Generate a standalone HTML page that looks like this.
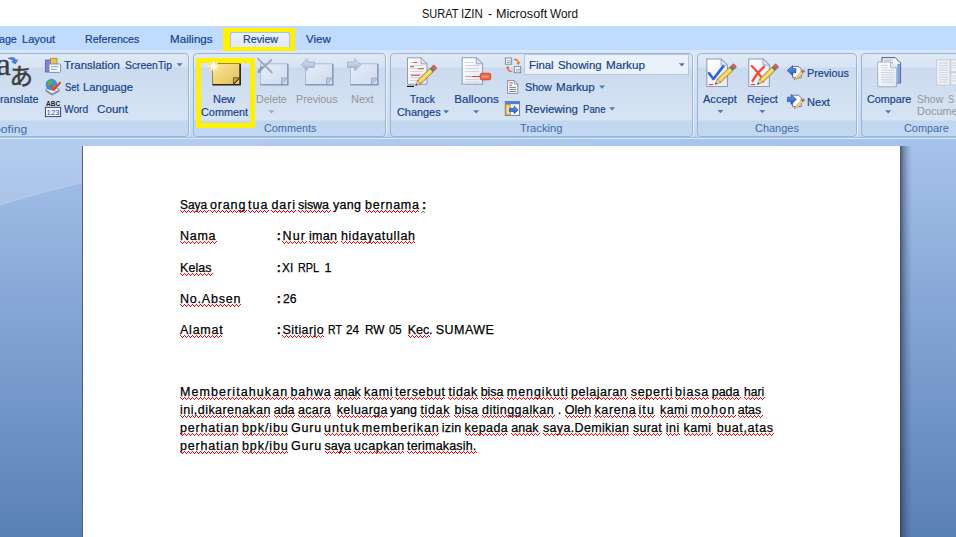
<!DOCTYPE html>
<html lang="id">
<head>
<meta charset="utf-8">
<title>SURAT IZIN - Microsoft Word</title>
<style>
*{box-sizing:border-box;margin:0;padding:0}
html,body{width:956px;height:537px;overflow:hidden;background:#fff}
body{position:relative;font-family:"Liberation Sans",sans-serif;font-size:11px;color:#15428b}
.abs{position:absolute}
#title{left:0;top:0;width:956px;height:26px;background:#fff}
#tabs{left:0;top:26px;width:956px;height:24px;background:#bfdbff}
.tab{position:absolute;top:7px;font-size:11.5px;color:#15428b;white-space:nowrap}
#ribbon{left:0;top:50px;width:956px;height:89px;background:linear-gradient(#dbe7f7 0,#c6daf2 80px,#bdd3ef 87px,#a3bfe6 87px,#a3bfe6 88px,#d2eefb 88px,#d2eefb 89px)}
.grp{position:absolute;top:2.5px;height:84px;border:1px solid #9ab5da;border-radius:4px;overflow:hidden;box-shadow:1px 0 0 rgba(255,255,255,.6);
 background:linear-gradient(#dfe9f6 0,#d8e4f3 13px,#cbdaee 14px,#d6e4f4 66px,#c1d7f0 67px,#c3d9f1 100%)}
.grp .lbl{position:absolute;left:0;right:0;top:70px;text-align:center;font-size:11px;color:#3e6aaa}
.t{position:absolute;white-space:nowrap;font-size:11px;color:#15428b}
.u{position:absolute;white-space:nowrap;font-size:11.6px;line-height:14px;transform-origin:0 50%}
.u.k{font-size:13.4px;line-height:16px;color:#111}
.u.b{color:#15428b;-webkit-text-stroke:.2px #15428b}
.u.g{color:#969696}
.u.l{color:#3e6aaa}
.ar{position:absolute;width:0;height:0;border-left:2.8px solid transparent;border-right:2.8px solid transparent;border-top:3px solid #4a6fa8}
#work{left:0;top:139px;width:956px;height:398px;background:linear-gradient(#a6c3ec 0,#5980b6 100%)}
#page{left:83px;top:146px;width:817px;height:391px;background:#fff}
#shadow{left:900px;top:146px;width:12px;height:391px;background:linear-gradient(90deg,rgba(45,55,80,.8) 0,rgba(45,55,80,.45) 3px,rgba(45,55,80,.15) 8px,rgba(45,55,80,0) 12px)}
#pl{left:82px;top:146px;width:1px;height:391px;background:#55606e}
.dl{position:absolute;white-space:nowrap;font-size:12.5px;color:#000;line-height:16px;transform-origin:0 50%;-webkit-text-stroke:.25px #000}
</style>
</head>
<body>
<div id="title" class="abs"></div>
<div id="tabs" class="abs">
</div>
<div id="ribbon" class="abs">
  <div class="grp" style="left:-10px;width:199px"></div>
  <div class="grp" style="left:193px;width:193px"></div>
  <div class="grp" style="left:390px;width:303px"></div>
  <div class="grp" style="left:697px;width:160px"></div>
  <div class="grp" style="left:861px;width:120px"></div>
</div>
<div id="work" class="abs"></div>
<svg class="abs" style="left:0;top:139px" width="84" height="80" viewBox="0 0 84 80"><path d="M0 0 H84 V43 C55 50 25 58 0 66 Z" fill="#fff" fill-opacity=".16"/><path d="M84 43 C55 50 25 58 0 66" fill="none" stroke="#fff" stroke-opacity=".22" stroke-width="1.2"/></svg>
<div class="abs" style="left:84px;top:139px;width:816px;height:7px;background:linear-gradient(90deg,rgba(255,255,255,.16),rgba(255,255,255,.02))"></div>
<div id="pl" class="abs"></div>
<div id="page" class="abs"></div>
<div id="shadow" class="abs"></div>
<div id="doc">
<span class="dl" style="left:180.0px;top:197.0px;transform:scaleX(0.954)">Saya</span>
<span class="dl" style="left:210.0px;top:197.0px;letter-spacing:0.85px">orang</span>
<span class="dl" style="left:248.0px;top:197.0px;letter-spacing:1.05px">tua</span>
<span class="dl" style="left:271.4px;top:197.0px;letter-spacing:0.92px">dari</span>
<span class="dl" style="left:298.0px;top:197.0px;letter-spacing:-0.07px">siswa</span>
<span class="dl" style="left:333.0px;top:197.0px;letter-spacing:0.30px">yang</span>
<span class="dl" style="left:365.0px;top:197.0px;letter-spacing:0.78px">bernama</span>
<span class="dl" style="left:422.0px;top:197.0px;letter-spacing:0.00px;font-weight:bold">:</span>
<span class="dl" style="left:180.0px;top:228.0px;letter-spacing:0.72px">Nama</span>
<span class="dl" style="left:276.8px;top:228.0px;letter-spacing:0.00px;font-weight:bold">:</span>
<span class="dl" style="left:282.5px;top:228.0px;letter-spacing:1.17px">Nur</span>
<span class="dl" style="left:309.0px;top:228.0px;letter-spacing:0.30px">iman</span>
<span class="dl" style="left:341.0px;top:228.0px;letter-spacing:0.66px">hidayatullah</span>
<span class="dl" style="left:180.0px;top:260.0px;letter-spacing:0.08px">Kelas</span>
<span class="dl" style="left:276.8px;top:260.0px;letter-spacing:0.00px;font-weight:bold">:</span>
<span class="dl" style="left:282.4px;top:260.0px;transform:scaleX(0.948)">XI</span>
<span class="dl" style="left:298.3px;top:260.0px;transform:scaleX(0.867)">RPL</span>
<span class="dl" style="left:324.4px;top:260.0px;letter-spacing:0.00px">1</span>
<span class="dl" style="left:180.0px;top:291.0px;letter-spacing:0.80px">No.Absen</span>
<span class="dl" style="left:276.8px;top:291.0px;letter-spacing:0.00px;font-weight:bold">:</span>
<span class="dl" style="left:282.5px;top:291.0px;transform:scaleX(0.971)">26</span>
<span class="dl" style="left:180.0px;top:322.0px;letter-spacing:0.76px">Alamat</span>
<span class="dl" style="left:276.8px;top:322.0px;letter-spacing:0.00px;font-weight:bold">:</span>
<span class="dl" style="left:282.5px;top:322.0px;letter-spacing:0.43px">Sitiarjo</span>
<span class="dl" style="left:328.2px;top:322.0px;transform:scaleX(0.840)">RT</span>
<span class="dl" style="left:346.0px;top:322.0px;transform:scaleX(0.949)">24</span>
<span class="dl" style="left:365.0px;top:322.0px;transform:scaleX(0.951)">RW</span>
<span class="dl" style="left:389.0px;top:322.0px;transform:scaleX(0.906)">05</span>
<span class="dl" style="left:407.7px;top:322.0px;letter-spacing:-0.04px">Kec.</span>
<span class="dl" style="left:435.8px;top:322.0px;letter-spacing:0.44px">SUMAWE</span>
<span class="dl" style="left:180.0px;top:384.0px;letter-spacing:1.08px">Memberitahukan</span>
<span class="dl" style="left:290.5px;top:384.0px;letter-spacing:0.84px">bahwa</span>
<span class="dl" style="left:334.0px;top:384.0px;letter-spacing:-0.10px">anak</span>
<span class="dl" style="left:364.0px;top:384.0px;letter-spacing:0.73px">kami</span>
<span class="dl" style="left:395.0px;top:384.0px;letter-spacing:0.69px">tersebut</span>
<span class="dl" style="left:448.5px;top:384.0px;letter-spacing:0.60px">tidak</span>
<span class="dl" style="left:480.7px;top:384.0px;letter-spacing:-0.05px">bisa</span>
<span class="dl" style="left:506.8px;top:384.0px;letter-spacing:0.93px">mengikuti</span>
<span class="dl" style="left:571.0px;top:384.0px;letter-spacing:0.53px">pelajaran</span>
<span class="dl" style="left:630.7px;top:384.0px;letter-spacing:0.71px">seperti</span>
<span class="dl" style="left:674.9px;top:384.0px;letter-spacing:0.88px">biasa</span>
<span class="dl" style="left:711.7px;top:384.0px;letter-spacing:-0.00px">pada</span>
<span class="dl" style="left:743.8px;top:384.0px;transform:scaleX(0.964)">hari</span>
<span class="dl" style="left:180.0px;top:402.0px;letter-spacing:0.45px">ini,dikarenakan</span>
<span class="dl" style="left:273.8px;top:402.0px;letter-spacing:-0.08px">ada</span>
<span class="dl" style="left:297.9px;top:402.0px;letter-spacing:0.38px">acara</span>
<span class="dl" style="left:336.7px;top:402.0px;letter-spacing:0.42px">keluarga</span>
<span class="dl" style="left:390.0px;top:402.0px;letter-spacing:-0.04px">yang</span>
<span class="dl" style="left:420.4px;top:402.0px;letter-spacing:0.67px">tidak</span>
<span class="dl" style="left:454.5px;top:402.0px;letter-spacing:0.19px">bisa</span>
<span class="dl" style="left:482.0px;top:402.0px;letter-spacing:0.45px">ditinggalkan</span>
<span class="dl" style="left:557.7px;top:402.0px;letter-spacing:0.00px">.</span>
<span class="dl" style="left:564.7px;top:402.0px;letter-spacing:0.03px">Oleh</span>
<span class="dl" style="left:594.5px;top:402.0px;letter-spacing:0.59px">karena</span>
<span class="dl" style="left:638.4px;top:402.0px;letter-spacing:1.20px">itu</span>
<span class="dl" style="left:660.0px;top:402.0px;letter-spacing:0.40px">kami</span>
<span class="dl" style="left:691.0px;top:402.0px;letter-spacing:1.29px">mohon</span>
<span class="dl" style="left:737.8px;top:402.0px;letter-spacing:-0.08px">atas</span>
<span class="dl" style="left:180.0px;top:420.0px;letter-spacing:0.81px">perhatian</span>
<span class="dl" style="left:242.0px;top:420.0px;letter-spacing:0.91px">bpk/ibu</span>
<span class="dl" style="left:291.0px;top:420.0px;letter-spacing:0.83px">Guru</span>
<span class="dl" style="left:324.0px;top:420.0px;letter-spacing:1.10px">untuk</span>
<span class="dl" style="left:361.8px;top:420.0px;letter-spacing:0.91px">memberikan</span>
<span class="dl" style="left:441.8px;top:420.0px;letter-spacing:0.21px">izin</span>
<span class="dl" style="left:464.6px;top:420.0px;letter-spacing:0.44px">kepada</span>
<span class="dl" style="left:511.2px;top:420.0px;letter-spacing:0.10px">anak</span>
<span class="dl" style="left:543.0px;top:420.0px;letter-spacing:0.33px">saya.Demikian</span>
<span class="dl" style="left:633.0px;top:420.0px;letter-spacing:0.25px">surat</span>
<span class="dl" style="left:665.8px;top:420.0px;letter-spacing:0.44px">ini</span>
<span class="dl" style="left:683.6px;top:420.0px;letter-spacing:0.33px">kami</span>
<span class="dl" style="left:716.7px;top:420.0px;letter-spacing:0.61px">buat,atas</span>
<span class="dl" style="left:180.0px;top:438.0px;letter-spacing:0.81px">perhatian</span>
<span class="dl" style="left:242.0px;top:438.0px;letter-spacing:0.91px">bpk/ibu</span>
<span class="dl" style="left:291.0px;top:438.0px;letter-spacing:0.83px">Guru</span>
<span class="dl" style="left:324.6px;top:438.0px;letter-spacing:-0.07px">saya</span>
<span class="dl" style="left:354.0px;top:438.0px;letter-spacing:0.51px">ucapkan</span>
<span class="dl" style="left:407.0px;top:438.0px;letter-spacing:0.17px">terimakasih.</span>
</div>
<svg id="sq" class="abs" style="left:0;top:0" width="956" height="537" viewBox="0 0 956 537" fill="none" stroke="#ff0000" stroke-width="1" stroke-linejoin="miter" shape-rendering="crispEdges">
<polyline points="180.5,210.5 182.5,212.5 184.5,210.5 186.5,212.5 188.5,210.5 190.5,212.5 192.5,210.5 194.5,212.5 196.5,210.5 198.5,212.5 200.5,210.5 202.5,212.5 204.5,210.5 206.5,212.5 208.5,210.5"/>
<polyline points="210.5,210.5 212.5,212.5 214.5,210.5 216.5,212.5 218.5,210.5 220.5,212.5 222.5,210.5 224.5,212.5 226.5,210.5 228.5,212.5 230.5,210.5 232.5,212.5 234.5,210.5 236.5,212.5 238.5,210.5 240.5,212.5 242.5,210.5 244.5,212.5 246.5,210.5"/>
<polyline points="248.5,210.5 250.5,212.5 252.5,210.5 254.5,212.5 256.5,210.5 258.5,212.5 260.5,210.5 262.5,212.5 264.5,210.5 266.5,212.5 268.5,210.5"/>
<polyline points="271.5,210.5 273.5,212.5 275.5,210.5 277.5,212.5 279.5,210.5 281.5,212.5 283.5,210.5 285.5,212.5 287.5,210.5 289.5,212.5 291.5,210.5 293.5,212.5 295.5,210.5"/>
<polyline points="298.5,210.5 300.5,212.5 302.5,210.5 304.5,212.5 306.5,210.5 308.5,212.5 310.5,210.5 312.5,212.5 314.5,210.5 316.5,212.5 318.5,210.5 320.5,212.5 322.5,210.5 324.5,212.5 326.5,210.5 328.5,212.5 330.5,210.5"/>
<polyline points="365.5,210.5 367.5,212.5 369.5,210.5 371.5,212.5 373.5,210.5 375.5,212.5 377.5,210.5 379.5,212.5 381.5,210.5 383.5,212.5 385.5,210.5 387.5,212.5 389.5,210.5 391.5,212.5 393.5,210.5 395.5,212.5 397.5,210.5 399.5,212.5 401.5,210.5 403.5,212.5 405.5,210.5 407.5,212.5 409.5,210.5 411.5,212.5 413.5,210.5 415.5,212.5 417.5,210.5 419.5,212.5"/>
<polyline stroke="#3a9a3a" points="421.0,213.0 423.0,211.0 425.0,213.0"/>
<polyline points="180.5,241.5 182.5,243.5 184.5,241.5 186.5,243.5 188.5,241.5 190.5,243.5 192.5,241.5 194.5,243.5 196.5,241.5 198.5,243.5 200.5,241.5 202.5,243.5 204.5,241.5 206.5,243.5 208.5,241.5 210.5,243.5 212.5,241.5 214.5,243.5 216.5,241.5"/>
<polyline points="282.5,241.5 284.5,243.5 286.5,241.5 288.5,243.5 290.5,241.5 292.5,243.5 294.5,241.5 296.5,243.5 298.5,241.5 300.5,243.5 302.5,241.5 304.5,243.5 306.5,241.5"/>
<polyline points="309.5,241.5 311.5,243.5 313.5,241.5 315.5,243.5 317.5,241.5 319.5,243.5 321.5,241.5 323.5,243.5 325.5,241.5 327.5,243.5 329.5,241.5 331.5,243.5 333.5,241.5 335.5,243.5 337.5,241.5"/>
<polyline points="341.5,241.5 343.5,243.5 345.5,241.5 347.5,243.5 349.5,241.5 351.5,243.5 353.5,241.5 355.5,243.5 357.5,241.5 359.5,243.5 361.5,241.5 363.5,243.5 365.5,241.5 367.5,243.5 369.5,241.5 371.5,243.5 373.5,241.5 375.5,243.5 377.5,241.5 379.5,243.5 381.5,241.5 383.5,243.5 385.5,241.5 387.5,243.5 389.5,241.5 391.5,243.5 393.5,241.5 395.5,243.5 397.5,241.5 399.5,243.5 401.5,241.5 403.5,243.5 405.5,241.5 407.5,243.5 409.5,241.5 411.5,243.5 413.5,241.5 415.5,243.5"/>
<polyline points="180.5,273.5 182.5,275.5 184.5,273.5 186.5,275.5 188.5,273.5 190.5,275.5 192.5,273.5 194.5,275.5 196.5,273.5 198.5,275.5 200.5,273.5 202.5,275.5 204.5,273.5 206.5,275.5 208.5,273.5 210.5,275.5 212.5,273.5"/>
<polyline points="180.5,304.5 182.5,306.5 184.5,304.5 186.5,306.5 188.5,304.5 190.5,306.5 192.5,304.5 194.5,306.5 196.5,304.5 198.5,306.5 200.5,304.5 202.5,306.5 204.5,304.5 206.5,306.5 208.5,304.5 210.5,306.5 212.5,304.5 214.5,306.5 216.5,304.5 218.5,306.5 220.5,304.5 222.5,306.5 224.5,304.5 226.5,306.5 228.5,304.5 230.5,306.5 232.5,304.5 234.5,306.5 236.5,304.5 238.5,306.5 240.5,304.5"/>
<polyline points="180.5,335.5 182.5,337.5 184.5,335.5 186.5,337.5 188.5,335.5 190.5,337.5 192.5,335.5 194.5,337.5 196.5,335.5 198.5,337.5 200.5,335.5 202.5,337.5 204.5,335.5 206.5,337.5 208.5,335.5 210.5,337.5 212.5,335.5 214.5,337.5 216.5,335.5 218.5,337.5 220.5,335.5 222.5,337.5"/>
<polyline points="282.5,335.5 284.5,337.5 286.5,335.5 288.5,337.5 290.5,335.5 292.5,337.5 294.5,335.5 296.5,337.5 298.5,335.5 300.5,337.5 302.5,335.5 304.5,337.5 306.5,335.5 308.5,337.5 310.5,335.5 312.5,337.5 314.5,335.5 316.5,337.5 318.5,335.5 320.5,337.5 322.5,335.5 324.5,337.5"/>
<polyline points="408.5,335.5 410.5,337.5 412.5,335.5 414.5,337.5 416.5,335.5 418.5,337.5 420.5,335.5 422.5,337.5 424.5,335.5 426.5,337.5 428.5,335.5 430.5,337.5"/>
<polyline points="180.5,397.5 182.5,399.5 184.5,397.5 186.5,399.5 188.5,397.5 190.5,399.5 192.5,397.5 194.5,399.5 196.5,397.5 198.5,399.5 200.5,397.5 202.5,399.5 204.5,397.5 206.5,399.5 208.5,397.5 210.5,399.5 212.5,397.5 214.5,399.5 216.5,397.5 218.5,399.5 220.5,397.5 222.5,399.5 224.5,397.5 226.5,399.5 228.5,397.5 230.5,399.5 232.5,397.5 234.5,399.5 236.5,397.5 238.5,399.5 240.5,397.5 242.5,399.5 244.5,397.5 246.5,399.5 248.5,397.5 250.5,399.5 252.5,397.5 254.5,399.5 256.5,397.5 258.5,399.5 260.5,397.5 262.5,399.5 264.5,397.5 266.5,399.5 268.5,397.5 270.5,399.5 272.5,397.5 274.5,399.5 276.5,397.5 278.5,399.5 280.5,397.5 282.5,399.5 284.5,397.5 286.5,399.5 288.5,397.5"/>
<polyline points="290.5,397.5 292.5,399.5 294.5,397.5 296.5,399.5 298.5,397.5 300.5,399.5 302.5,397.5 304.5,399.5 306.5,397.5 308.5,399.5 310.5,397.5 312.5,399.5 314.5,397.5 316.5,399.5 318.5,397.5 320.5,399.5 322.5,397.5 324.5,399.5 326.5,397.5 328.5,399.5 330.5,397.5"/>
<polyline points="334.5,397.5 336.5,399.5 338.5,397.5 340.5,399.5 342.5,397.5 344.5,399.5 346.5,397.5 348.5,399.5 350.5,397.5 352.5,399.5 354.5,397.5 356.5,399.5 358.5,397.5 360.5,399.5"/>
<polyline points="364.5,397.5 366.5,399.5 368.5,397.5 370.5,399.5 372.5,397.5 374.5,399.5 376.5,397.5 378.5,399.5 380.5,397.5 382.5,399.5 384.5,397.5 386.5,399.5 388.5,397.5 390.5,399.5 392.5,397.5"/>
<polyline points="395.5,397.5 397.5,399.5 399.5,397.5 401.5,399.5 403.5,397.5 405.5,399.5 407.5,397.5 409.5,399.5 411.5,397.5 413.5,399.5 415.5,397.5 417.5,399.5 419.5,397.5 421.5,399.5 423.5,397.5 425.5,399.5 427.5,397.5 429.5,399.5 431.5,397.5 433.5,399.5 435.5,397.5 437.5,399.5 439.5,397.5 441.5,399.5 443.5,397.5 445.5,399.5"/>
<polyline points="448.5,397.5 450.5,399.5 452.5,397.5 454.5,399.5 456.5,397.5 458.5,399.5 460.5,397.5 462.5,399.5 464.5,397.5 466.5,399.5 468.5,397.5 470.5,399.5 472.5,397.5 474.5,399.5 476.5,397.5 478.5,399.5"/>
<polyline points="481.5,397.5 483.5,399.5 485.5,397.5 487.5,399.5 489.5,397.5 491.5,399.5 493.5,397.5 495.5,399.5 497.5,397.5 499.5,399.5 501.5,397.5 503.5,399.5"/>
<polyline points="507.5,397.5 509.5,399.5 511.5,397.5 513.5,399.5 515.5,397.5 517.5,399.5 519.5,397.5 521.5,399.5 523.5,397.5 525.5,399.5 527.5,397.5 529.5,399.5 531.5,397.5 533.5,399.5 535.5,397.5 537.5,399.5 539.5,397.5 541.5,399.5 543.5,397.5 545.5,399.5 547.5,397.5 549.5,399.5 551.5,397.5 553.5,399.5 555.5,397.5 557.5,399.5 559.5,397.5 561.5,399.5 563.5,397.5 565.5,399.5 567.5,397.5"/>
<polyline points="571.5,397.5 573.5,399.5 575.5,397.5 577.5,399.5 579.5,397.5 581.5,399.5 583.5,397.5 585.5,399.5 587.5,397.5 589.5,399.5 591.5,397.5 593.5,399.5 595.5,397.5 597.5,399.5 599.5,397.5 601.5,399.5 603.5,397.5 605.5,399.5 607.5,397.5 609.5,399.5 611.5,397.5 613.5,399.5 615.5,397.5 617.5,399.5 619.5,397.5 621.5,399.5 623.5,397.5 625.5,399.5 627.5,397.5"/>
<polyline points="631.5,397.5 633.5,399.5 635.5,397.5 637.5,399.5 639.5,397.5 641.5,399.5 643.5,397.5 645.5,399.5 647.5,397.5 649.5,399.5 651.5,397.5 653.5,399.5 655.5,397.5 657.5,399.5 659.5,397.5 661.5,399.5 663.5,397.5 665.5,399.5 667.5,397.5 669.5,399.5 671.5,397.5 673.5,399.5"/>
<polyline points="675.5,397.5 677.5,399.5 679.5,397.5 681.5,399.5 683.5,397.5 685.5,399.5 687.5,397.5 689.5,399.5 691.5,397.5 693.5,399.5 695.5,397.5 697.5,399.5 699.5,397.5 701.5,399.5 703.5,397.5 705.5,399.5 707.5,397.5 709.5,399.5"/>
<polyline points="712.5,397.5 714.5,399.5 716.5,397.5 718.5,399.5 720.5,397.5 722.5,399.5 724.5,397.5 726.5,399.5 728.5,397.5 730.5,399.5 732.5,397.5 734.5,399.5 736.5,397.5 738.5,399.5 740.5,397.5"/>
<polyline points="744.5,397.5 746.5,399.5 748.5,397.5 750.5,399.5 752.5,397.5 754.5,399.5 756.5,397.5 758.5,399.5 760.5,397.5 762.5,399.5 764.5,397.5"/>
<polyline points="180.5,415.5 182.5,417.5 184.5,415.5 186.5,417.5 188.5,415.5 190.5,417.5 192.5,415.5 194.5,417.5 196.5,415.5 198.5,417.5 200.5,415.5 202.5,417.5 204.5,415.5 206.5,417.5 208.5,415.5 210.5,417.5 212.5,415.5 214.5,417.5 216.5,415.5 218.5,417.5 220.5,415.5 222.5,417.5 224.5,415.5 226.5,417.5 228.5,415.5 230.5,417.5 232.5,415.5 234.5,417.5 236.5,415.5 238.5,417.5 240.5,415.5 242.5,417.5 244.5,415.5 246.5,417.5 248.5,415.5 250.5,417.5 252.5,415.5 254.5,417.5 256.5,415.5 258.5,417.5 260.5,415.5 262.5,417.5 264.5,415.5 266.5,417.5 268.5,415.5 270.5,417.5"/>
<polyline points="274.5,415.5 276.5,417.5 278.5,415.5 280.5,417.5 282.5,415.5 284.5,417.5 286.5,415.5 288.5,417.5 290.5,415.5 292.5,417.5 294.5,415.5"/>
<polyline points="298.5,415.5 300.5,417.5 302.5,415.5 304.5,417.5 306.5,415.5 308.5,417.5 310.5,415.5 312.5,417.5 314.5,415.5 316.5,417.5 318.5,415.5 320.5,417.5 322.5,415.5 324.5,417.5 326.5,415.5 328.5,417.5 330.5,415.5"/>
<polyline points="337.5,415.5 339.5,417.5 341.5,415.5 343.5,417.5 345.5,415.5 347.5,417.5 349.5,415.5 351.5,417.5 353.5,415.5 355.5,417.5 357.5,415.5 359.5,417.5 361.5,415.5 363.5,417.5 365.5,415.5 367.5,417.5 369.5,415.5 371.5,417.5 373.5,415.5 375.5,417.5 377.5,415.5 379.5,417.5 381.5,415.5 383.5,417.5 385.5,415.5 387.5,417.5"/>
<polyline points="420.5,415.5 422.5,417.5 424.5,415.5 426.5,417.5 428.5,415.5 430.5,417.5 432.5,415.5 434.5,417.5 436.5,415.5 438.5,417.5 440.5,415.5 442.5,417.5 444.5,415.5 446.5,417.5 448.5,415.5 450.5,417.5"/>
<polyline points="454.5,415.5 456.5,417.5 458.5,415.5 460.5,417.5 462.5,415.5 464.5,417.5 466.5,415.5 468.5,417.5 470.5,415.5 472.5,417.5 474.5,415.5 476.5,417.5 478.5,415.5"/>
<polyline points="482.5,415.5 484.5,417.5 486.5,415.5 488.5,417.5 490.5,415.5 492.5,417.5 494.5,415.5 496.5,417.5 498.5,415.5 500.5,417.5 502.5,415.5 504.5,417.5 506.5,415.5 508.5,417.5 510.5,415.5 512.5,417.5 514.5,415.5 516.5,417.5 518.5,415.5 520.5,417.5 522.5,415.5 524.5,417.5 526.5,415.5 528.5,417.5 530.5,415.5 532.5,417.5 534.5,415.5 536.5,417.5 538.5,415.5 540.5,417.5 542.5,415.5 544.5,417.5 546.5,415.5 548.5,417.5 550.5,415.5 552.5,417.5 554.5,415.5"/>
<polyline points="565.5,415.5 567.5,417.5 569.5,415.5 571.5,417.5 573.5,415.5 575.5,417.5 577.5,415.5 579.5,417.5 581.5,415.5 583.5,417.5 585.5,415.5 587.5,417.5 589.5,415.5 591.5,417.5"/>
<polyline points="594.5,415.5 596.5,417.5 598.5,415.5 600.5,417.5 602.5,415.5 604.5,417.5 606.5,415.5 608.5,417.5 610.5,415.5 612.5,417.5 614.5,415.5 616.5,417.5 618.5,415.5 620.5,417.5 622.5,415.5 624.5,417.5 626.5,415.5 628.5,417.5 630.5,415.5 632.5,417.5 634.5,415.5 636.5,417.5"/>
<polyline points="638.5,415.5 640.5,417.5 642.5,415.5 644.5,417.5 646.5,415.5 648.5,417.5 650.5,415.5 652.5,417.5 654.5,415.5"/>
<polyline points="660.5,415.5 662.5,417.5 664.5,415.5 666.5,417.5 668.5,415.5 670.5,417.5 672.5,415.5 674.5,417.5 676.5,415.5 678.5,417.5 680.5,415.5 682.5,417.5 684.5,415.5 686.5,417.5 688.5,415.5"/>
<polyline points="691.5,415.5 693.5,417.5 695.5,415.5 697.5,417.5 699.5,415.5 701.5,417.5 703.5,415.5 705.5,417.5 707.5,415.5 709.5,417.5 711.5,415.5 713.5,417.5 715.5,415.5 717.5,417.5 719.5,415.5 721.5,417.5 723.5,415.5 725.5,417.5 727.5,415.5 729.5,417.5 731.5,415.5 733.5,417.5 735.5,415.5"/>
<polyline points="738.5,415.5 740.5,417.5 742.5,415.5 744.5,417.5 746.5,415.5 748.5,417.5 750.5,415.5 752.5,417.5 754.5,415.5 756.5,417.5 758.5,415.5 760.5,417.5 762.5,415.5"/>
<polyline points="180.5,433.5 182.5,435.5 184.5,433.5 186.5,435.5 188.5,433.5 190.5,435.5 192.5,433.5 194.5,435.5 196.5,433.5 198.5,435.5 200.5,433.5 202.5,435.5 204.5,433.5 206.5,435.5 208.5,433.5 210.5,435.5 212.5,433.5 214.5,435.5 216.5,433.5 218.5,435.5 220.5,433.5 222.5,435.5 224.5,433.5 226.5,435.5 228.5,433.5 230.5,435.5 232.5,433.5 234.5,435.5 236.5,433.5 238.5,435.5"/>
<polyline points="242.5,433.5 244.5,435.5 246.5,433.5 248.5,435.5 250.5,433.5 252.5,435.5 254.5,433.5 256.5,435.5 258.5,433.5 260.5,435.5 262.5,433.5 264.5,435.5 266.5,433.5 268.5,435.5 270.5,433.5 272.5,435.5 274.5,433.5 276.5,435.5 278.5,433.5 280.5,435.5 282.5,433.5 284.5,435.5 286.5,433.5 288.5,435.5"/>
<polyline points="324.5,433.5 326.5,435.5 328.5,433.5 330.5,435.5 332.5,433.5 334.5,435.5 336.5,433.5 338.5,435.5 340.5,433.5 342.5,435.5 344.5,433.5 346.5,435.5 348.5,433.5 350.5,435.5 352.5,433.5 354.5,435.5 356.5,433.5 358.5,435.5 360.5,433.5"/>
<polyline points="362.5,433.5 364.5,435.5 366.5,433.5 368.5,435.5 370.5,433.5 372.5,435.5 374.5,433.5 376.5,435.5 378.5,433.5 380.5,435.5 382.5,433.5 384.5,435.5 386.5,433.5 388.5,435.5 390.5,433.5 392.5,435.5 394.5,433.5 396.5,435.5 398.5,433.5 400.5,435.5 402.5,433.5 404.5,435.5 406.5,433.5 408.5,435.5 410.5,433.5 412.5,435.5 414.5,433.5 416.5,435.5 418.5,433.5 420.5,435.5 422.5,433.5 424.5,435.5 426.5,433.5 428.5,435.5 430.5,433.5 432.5,435.5 434.5,433.5 436.5,435.5 438.5,433.5"/>
<polyline points="465.5,433.5 467.5,435.5 469.5,433.5 471.5,435.5 473.5,433.5 475.5,435.5 477.5,433.5 479.5,435.5 481.5,433.5 483.5,435.5 485.5,433.5 487.5,435.5 489.5,433.5 491.5,435.5 493.5,433.5 495.5,435.5 497.5,433.5 499.5,435.5 501.5,433.5 503.5,435.5 505.5,433.5 507.5,435.5"/>
<polyline points="511.5,433.5 513.5,435.5 515.5,433.5 517.5,435.5 519.5,433.5 521.5,435.5 523.5,433.5 525.5,435.5 527.5,433.5 529.5,435.5 531.5,433.5 533.5,435.5 535.5,433.5 537.5,435.5 539.5,433.5"/>
<polyline points="543.5,433.5 545.5,435.5 547.5,433.5 549.5,435.5 551.5,433.5 553.5,435.5 555.5,433.5 557.5,435.5 559.5,433.5 561.5,435.5 563.5,433.5 565.5,435.5 567.5,433.5 569.5,435.5 571.5,433.5 573.5,435.5 575.5,433.5 577.5,435.5 579.5,433.5 581.5,435.5 583.5,433.5 585.5,435.5 587.5,433.5 589.5,435.5 591.5,433.5 593.5,435.5 595.5,433.5 597.5,435.5 599.5,433.5 601.5,435.5 603.5,433.5 605.5,435.5 607.5,433.5 609.5,435.5 611.5,433.5 613.5,435.5 615.5,433.5 617.5,435.5 619.5,433.5 621.5,435.5 623.5,433.5 625.5,435.5 627.5,433.5 629.5,435.5"/>
<polyline points="633.5,433.5 635.5,435.5 637.5,433.5 639.5,435.5 641.5,433.5 643.5,435.5 645.5,433.5 647.5,435.5 649.5,433.5 651.5,435.5 653.5,433.5 655.5,435.5 657.5,433.5 659.5,435.5 661.5,433.5"/>
<polyline points="666.5,433.5 668.5,435.5 670.5,433.5 672.5,435.5 674.5,433.5 676.5,435.5 678.5,433.5 680.5,435.5"/>
<polyline points="684.5,433.5 686.5,435.5 688.5,433.5 690.5,435.5 692.5,433.5 694.5,435.5 696.5,433.5 698.5,435.5 700.5,433.5 702.5,435.5 704.5,433.5 706.5,435.5 708.5,433.5 710.5,435.5 712.5,433.5"/>
<polyline points="717.5,433.5 719.5,435.5 721.5,433.5 723.5,435.5 725.5,433.5 727.5,435.5 729.5,433.5 731.5,435.5 733.5,433.5 735.5,435.5 737.5,433.5 739.5,435.5 741.5,433.5 743.5,435.5 745.5,433.5 747.5,435.5 749.5,433.5 751.5,435.5 753.5,433.5 755.5,435.5 757.5,433.5 759.5,435.5 761.5,433.5 763.5,435.5 765.5,433.5 767.5,435.5 769.5,433.5 771.5,435.5 773.5,433.5"/>
<polyline points="180.5,451.5 182.5,453.5 184.5,451.5 186.5,453.5 188.5,451.5 190.5,453.5 192.5,451.5 194.5,453.5 196.5,451.5 198.5,453.5 200.5,451.5 202.5,453.5 204.5,451.5 206.5,453.5 208.5,451.5 210.5,453.5 212.5,451.5 214.5,453.5 216.5,451.5 218.5,453.5 220.5,451.5 222.5,453.5 224.5,451.5 226.5,453.5 228.5,451.5 230.5,453.5 232.5,451.5 234.5,453.5 236.5,451.5 238.5,453.5"/>
<polyline points="242.5,451.5 244.5,453.5 246.5,451.5 248.5,453.5 250.5,451.5 252.5,453.5 254.5,451.5 256.5,453.5 258.5,451.5 260.5,453.5 262.5,451.5 264.5,453.5 266.5,451.5 268.5,453.5 270.5,451.5 272.5,453.5 274.5,451.5 276.5,453.5 278.5,451.5 280.5,453.5 282.5,451.5 284.5,453.5 286.5,451.5 288.5,453.5"/>
<polyline points="325.5,451.5 327.5,453.5 329.5,451.5 331.5,453.5 333.5,451.5 335.5,453.5 337.5,451.5 339.5,453.5 341.5,451.5 343.5,453.5 345.5,451.5 347.5,453.5 349.5,451.5 351.5,453.5"/>
<polyline points="354.5,451.5 356.5,453.5 358.5,451.5 360.5,453.5 362.5,451.5 364.5,453.5 366.5,451.5 368.5,453.5 370.5,451.5 372.5,453.5 374.5,451.5 376.5,453.5 378.5,451.5 380.5,453.5 382.5,451.5 384.5,453.5 386.5,451.5 388.5,453.5 390.5,451.5 392.5,453.5 394.5,451.5 396.5,453.5 398.5,451.5 400.5,453.5 402.5,451.5 404.5,453.5"/>
<polyline points="407.5,451.5 409.5,453.5 411.5,451.5 413.5,453.5 415.5,451.5 417.5,453.5 419.5,451.5 421.5,453.5 423.5,451.5 425.5,453.5 427.5,451.5 429.5,453.5 431.5,451.5 433.5,453.5 435.5,451.5 437.5,453.5 439.5,451.5 441.5,453.5 443.5,451.5 445.5,453.5 447.5,451.5 449.5,453.5 451.5,451.5 453.5,453.5 455.5,451.5 457.5,453.5 459.5,451.5 461.5,453.5 463.5,451.5 465.5,453.5 467.5,451.5 469.5,453.5 471.5,451.5 473.5,453.5 475.5,451.5 477.5,453.5"/>
</svg>
<!-- active tab + yellow highlight boxes -->
<div class="abs" style="left:230px;top:32px;width:60px;height:19px;border-radius:3px 3px 0 0;background:linear-gradient(#e9f1fc,#dde9f8);border:1px solid #a8c3e6;border-bottom:none"></div>
<div class="abs" style="left:223px;top:28px;width:72px;height:23px;border:solid #fff200;border-width:4.5px 5px 4.5px 7px"></div>
<div class="abs" style="left:196px;top:58px;width:59px;height:70px;border:5px solid #fff200"></div>
<!-- combo box -->
<div class="abs" style="left:524px;top:54px;width:165px;height:21px;border:1px solid #b4c9e6;background:#eaf1fb"></div>
<svg class="abs" style="left:0;top:0" width="956" height="145" viewBox="0 0 956 145">
<defs>
 <linearGradient id="gNote" x1="0" y1="0" x2="1" y2="1"><stop offset="0" stop-color="#fbe79c"/><stop offset="1" stop-color="#e3bd55"/></linearGradient>
 <linearGradient id="gDis" x1="0" y1="0" x2="1" y2="1"><stop offset="0" stop-color="#e6edf8"/><stop offset="1" stop-color="#cfdbee"/></linearGradient>
 <linearGradient id="gDoc" x1="0" y1="0" x2="1" y2="1"><stop offset="0" stop-color="#ffffff"/><stop offset="1" stop-color="#e4eaf4"/></linearGradient>
 <linearGradient id="gArr" x1="0" y1="0" x2="0" y2="1"><stop offset="0" stop-color="#dfe6f2"/><stop offset="1" stop-color="#9eb0cf"/></linearGradient>
 <linearGradient id="gBlue" x1="0" y1="0" x2="0" y2="1"><stop offset="0" stop-color="#6aa0ee"/><stop offset="1" stop-color="#1f55c0"/></linearGradient>
 <radialGradient id="gStar"><stop offset="0" stop-color="#fff"/><stop offset=".45" stop-color="#fff7c0"/><stop offset="1" stop-color="#f5c53a" stop-opacity="0"/></radialGradient>
 <g id="pencil"><!-- tip at 0,0 pointing down-left; body goes up-right, length ~28 -->
  <g transform="rotate(-44)">
   <path d="M0 0 L5.5 -2.4 L5.5 2.4 Z" fill="#e9cfa0" stroke="#7a6430" stroke-width=".5"/>
   <path d="M0 0 L1.8 -.8 L1.8 .8 Z" fill="#333"/>
   <rect x="5.5" y="-2.4" width="16.5" height="4.8" fill="#f3c94c" stroke="#8a6a1c" stroke-width=".6"/>
   <rect x="5.5" y="-.9" width="16.5" height="1.6" fill="#fbe48d"/>
   <rect x="22" y="-2.4" width="2" height="4.8" fill="#3f8f4b"/>
   <rect x="24" y="-2.4" width="3.6" height="4.8" rx="1" fill="#d9605f" stroke="#8c3a3a" stroke-width=".4"/>
  </g>
 </g>
 <g id="doc20"><!-- 20x27 document, origin top-left, fold 6 -->
  <path d="M.5 .5 H14 L20 6.5 V27 H.5 Z" fill="url(#gDoc)" stroke="#8e9cb5" stroke-width="1"/>
  <path d="M14 .5 V6.5 H20 Z" fill="#dfe6f2" stroke="#8e9cb5" stroke-width=".8"/>
 </g>
</defs>

<!-- Translate big icon -->
<text x="-3.6" y="75.4" font-family="Liberation Serif,serif" font-size="32" fill="#3c3c3c" stroke="#3c3c3c" stroke-width=".3">a</text>
<text x="9.6" y="85" font-family="Noto Sans CJK JP,sans-serif" font-size="23.5" fill="#3c3c3c" stroke="#3c3c3c" stroke-width=".5">あ</text>
<path d="M8 58.5 C12 56.5 15.5 57.5 15.8 60.5 L17.8 59.6 L15.5 64 L11.5 61.8 L13.5 61.2 C13 59.5 10.8 59.2 8 58.5 Z" fill="#3f7de0" stroke="#2a5cb8" stroke-width=".5"/>

<!-- Translation ScreenTip icon -->
<rect x="45.3" y="60" width="6" height="12" fill="#8b7fd6" stroke="#5a4fa8" stroke-width=".7"/>
<rect x="50.5" y="58.3" width="6.5" height="6.5" fill="#e9c24a" stroke="#a8842a" stroke-width=".7"/>
<rect x="49" y="64" width="11.6" height="8.4" rx="1" fill="#f6f9fd" stroke="#6f86ad" stroke-width=".9"/>
<path d="M51 66.7 H58.5 M51 69.3 H57" stroke="#8aa0c4" stroke-width="1"/>

<!-- Set Language icon -->
<path d="M45.5 89.5 L52 93.8 L59.5 89.5 L53 86 Z" fill="#f2f5fa" stroke="#6b7d9c" stroke-width=".8"/>
<path d="M45.5 90.8 L52 95 L59.5 90.8" fill="none" stroke="#5a6b88" stroke-width=".9"/>
<circle cx="51.5" cy="84.6" r="5.4" fill="#3f8fd6" stroke="#2d66a8" stroke-width=".6"/>
<path d="M48 81.5 C49.5 79.8 52 80 53 81.5 C52 83.5 50.5 83 50 85.5 C48.5 85.8 47 84 48 81.5 Z M53 86 C54.5 85 56 86.5 55.5 88 C54.5 89 53 88.5 53 86 Z" fill="#59b24a"/>
<path d="M51 86 L53.6 90 L60 82.8" fill="none" stroke="#e8432e" stroke-width="2.1" stroke-linecap="round" stroke-linejoin="round"/>

<!-- Word Count icon -->
<text x="46" y="106" font-family="Liberation Sans,sans-serif" font-size="6.6" font-weight="bold" fill="#222" textLength="14.2" lengthAdjust="spacingAndGlyphs">ABC</text>
<rect x="45.4" y="107.3" width="15.2" height="9.3" fill="#f4f7fc" stroke="#30468c" stroke-width="1"/>
<text x="46.6" y="115.2" font-family="Liberation Sans,sans-serif" font-size="8" fill="#2a4aa8" textLength="13" lengthAdjust="spacingAndGlyphs">123</text>

<!-- New Comment icon -->
<rect x="212.5" y="63.6" width="27.3" height="21" fill="url(#gNote)" stroke="#8a6d2a" stroke-width=".8"/>
<path d="M212.5 84.8 H240.2 V63.8" fill="none" stroke="#2e2410" stroke-width="1.5"/>
<path d="M233.5 84.3 V77.8 H239.6 Z" fill="#c9a347" stroke="#5a4418" stroke-width=".8"/>
<path d="M233.8 84 L239.4 78.2" stroke="#2e2410" stroke-width="1"/>
<circle cx="213.8" cy="66.3" r="6.2" fill="url(#gStar)"/>
<path d="M213.8 60.2 V72.4 M207.8 66.3 H219.8 M209.6 62.1 L218 70.5 M218 62.1 L209.6 70.5" stroke="#fff6c8" stroke-width="1" stroke-linecap="round"/>
<circle cx="213.8" cy="66.3" r="1.7" fill="#fff"/>

<!-- Delete (disabled) -->
<g id="disnote">
 <rect x="260.5" y="63.8" width="27" height="20.8" fill="url(#gDis)" stroke="#a9b9d4" stroke-width=".9"/>
 <path d="M260.5 84.8 H287.9 V64" fill="none" stroke="#7f93b8" stroke-width="1.3"/>
 <path d="M281.5 84.3 V78 H287.4 Z" fill="#bccbe2" stroke="#8a9cbd" stroke-width=".7"/>
</g>
<path d="M258 58.6 L271.8 72.5 M271.5 60 L259 71.5" stroke="#9aaac6" stroke-width="1.8" stroke-linecap="round"/>
<path d="M259 71.5 L261.8 67.5" stroke="#8c9dbc" stroke-width="3" stroke-linecap="round"/>
<!-- Previous (disabled) -->
<use href="#disnote" x="45"/>
<path d="M301.2 64.7 L307.2 58.7 V62 H314.3 V67.4 H307.2 V70.7 Z" fill="url(#gArr)" stroke="#94a6c6" stroke-width=".7"/>
<!-- Next (disabled) -->
<use href="#disnote" x="90"/>
<path d="M360.8 64.7 L354.8 58.7 V62 H347.4 V67.4 H354.8 V70.7 Z" fill="url(#gArr)" stroke="#94a6c6" stroke-width=".7"/>

<!-- Track Changes -->
<use href="#doc20" x="407" y="57.3"/>
<path d="M410 62.5 H419 M410 65.5 H423 M410 68.5 H423 M410 71.5 H423 M410 74.5 H423 M410 77.5 H420 M410 80.5 H418" stroke="#c3ccda" stroke-width=".8"/>
<path d="M413.5 62.5 H417 M410 66.8 H414 M418 68.8 H424 M411 75.2 H420" stroke="#e2432c" stroke-width="1.1"/>
<use href="#pencil" x="415.6" y="85.6"/>
<path d="M407 86.4 H414" stroke="#111" stroke-width="1.2"/>

<!-- Balloons -->
<use href="#doc20" x="461.6" y="57.3" transform="translate(461.6 57.3) scale(1.05 1) translate(-461.6 -57.3)"/>
<path d="M465 62.5 H474 M465 65.5 H479 M465 68.5 H479 M465 71.5 H479 M465 79.5 H479 M465 82 H479" stroke="#c3ccda" stroke-width=".8"/>
<path d="M465.5 76.5 H472" stroke="#e2432c" stroke-width="1" stroke-dasharray="1 1"/>
<path d="M472 76.5 H480" stroke="#e2432c" stroke-width="1"/>
<rect x="480.3" y="73.3" width="10.4" height="6.5" rx="1.5" fill="#ee6a4a" stroke="#d23c20" stroke-width=".9"/>
<path d="M482.5 76.6 H488.8" stroke="#f7b6a4" stroke-width="1.6" stroke-dasharray="1.2 .8"/>

<!-- Display for Review icon -->
<rect x="505.3" y="58" width="6.4" height="6.2" fill="#f5f7fb" stroke="#6d7890" stroke-width=".8"/>
<path d="M507.4 60.2h1v1h-1z M509.5 60.2h1v1h-1z M507.4 62h1v1h-1z M509.5 62h1v1h-1z" fill="#4d5870"/>
<rect x="514.3" y="66.6" width="6.4" height="6.2" fill="#f5f7fb" stroke="#6d7890" stroke-width=".8"/>
<path d="M516.4 68.8h1v1h-1z M518.5 68.8h1v1h-1z M516.4 70.6h1v1h-1z M518.5 70.6h1v1h-1z" fill="#4d5870"/>
<path d="M514 59.6 C517 59.2 518.6 60.4 518.4 63" fill="none" stroke="#ee6a2c" stroke-width="1.3"/>
<path d="M516.4 62.4 L518.5 65 L520.4 62.2 Z" fill="#ee6a2c"/>
<path d="M512.2 71.2 C509.2 71.6 507.6 70.4 507.8 67.8" fill="none" stroke="#ee6a2c" stroke-width="1.3"/>
<path d="M509.8 68.4 L507.7 65.8 L505.8 68.6 Z" fill="#ee6a2c"/>

<!-- Show Markup icon -->
<path d="M507.6 80.6 H514.4 L517.8 84 V93.4 H507.6 Z" fill="#fdfdff" stroke="#7685a2" stroke-width=".9"/>
<path d="M514.4 80.6 V84 H517.8" fill="none" stroke="#7685a2" stroke-width=".8"/>
<path d="M509.3 83 H513 M509.3 85.2 H512" stroke="#e2432c" stroke-width="1.1"/>
<path d="M509.3 87.4 H516 M509.3 89.4 H516 M509.3 91.4 H516" stroke="#5f6d8a" stroke-width=".9"/>

<!-- Reviewing Pane icon -->
<rect x="505.3" y="101.6" width="14.3" height="13.8" fill="#fbfcff" stroke="#4f6fb8" stroke-width=".9"/>
<rect x="505.3" y="101.6" width="14.3" height="2.6" fill="#4f7fdc"/>
<rect x="505.8" y="104.4" width="4.4" height="10.6" fill="#e9c96a" stroke="#a8862c" stroke-width=".7"/>
<rect x="507.2" y="105.8" width="1.4" height="7.8" fill="#f7e9a8"/>
<path d="M509.4 108.3 H514 V106 L518.2 109.9 L514 113.8 V111.5 H509.4 Z" fill="url(#gBlue)" stroke="#1c46a0" stroke-width=".6"/>

<!-- Accept -->
<use href="#doc20" transform="translate(706.3 58.4) scale(1.06 1.04)"/>
<path d="M709 73.2 L713.4 79 L723.2 66.4" fill="none" stroke="#2f62d8" stroke-width="2.6" stroke-linecap="round" stroke-linejoin="round"/>
<use href="#pencil" x="715.2" y="84.4"/>
<path d="M708.8 84.6 H713.2" stroke="#e2432c" stroke-width="1.1"/>

<!-- Reject -->
<use href="#doc20" transform="translate(748.2 58.4) scale(1.06 1.04)"/>
<path d="M751.8 66 C756 70 760 75 763.8 80.5 M764 66.8 C759.5 70.5 755.5 75.5 752.5 81" fill="none" stroke="#ee4a34" stroke-width="2.3" stroke-linecap="round"/>
<use href="#pencil" x="757.4" y="84.4"/>
<path d="M750.8 84.6 H755.2" stroke="#e2432c" stroke-width="1.1"/>

<!-- Previous / Next change small icons -->
<g id="smdoc">
 <path d="M792.6 66.4 H798.6 L801.2 69 V77.8 H792.6 Z" fill="#fdfdff" stroke="#5f6d8a" stroke-width=".9"/>
 <g transform="translate(794.2 80) scale(.5)"><use href="#pencil"/></g>
</g>
<path d="M787.2 70.6 L792.6 65.6 V68.4 H796 V72.8 H792.6 V75.6 Z" fill="url(#gBlue)" stroke="#1c46a0" stroke-width=".6"/>
<use href="#smdoc" y="28.8"/>
<path d="M796.4 99.4 L791 94.4 V97.2 H787.4 V101.6 H791 V104.4 Z" fill="url(#gBlue)" stroke="#1c46a0" stroke-width=".6"/>

<!-- Compare -->
<path d="M882 57.6 H895.2 L900.6 63 V83 H882 Z" fill="#f3f6fb" stroke="#3e4a66" stroke-width=".9"/>
<path d="M897.2 64 H900.2 V82.6 H897.2 Z" fill="#7ea2e6"/>
<path d="M884 60 H893 M884 62.4 H893" stroke="#9aa8c2" stroke-width=".8"/>
<path d="M877.8 62 H890.6 L896.4 67.8 V86.8 H877.8 Z" fill="url(#gDoc)" stroke="#9aa6bd" stroke-width=".9"/>
<path d="M890.6 62 V67.8 H896.4" fill="#e6ebf4" stroke="#9aa6bd" stroke-width=".8"/>
<path d="M881 65.4 H888 M881 67.8 H888 M881 70.2 H894 M881 72.6 H894 M881 75 H894 M881 77.4 H894 M881 79.8 H894 M881 82.2 H894" stroke="#c0cadb" stroke-width=".8"/>

<!-- Show Source Documents (disabled, clipped) -->
<rect x="936.6" y="59.8" width="13.4" height="25.2" fill="#eef1f6" stroke="#c2c9d6" stroke-width=".9"/>
<rect x="950.8" y="59.8" width="10" height="12" fill="#eef1f6" stroke="#c2c9d6" stroke-width=".9"/>
<rect x="950.8" y="72.8" width="10" height="12.2" fill="#eef1f6" stroke="#c2c9d6" stroke-width=".9"/>
<path d="M938.8 63 H948 M938.8 65.4 H948 M938.8 67.8 H948 M938.8 70.2 H948 M938.8 72.6 H948 M938.8 75 H948 M938.8 77.4 H948 M938.8 79.8 H948 M938.8 82.2 H948 M952.6 63 H956 M952.6 65.4 H956 M952.6 67.8 H956 M952.6 76 H956 M952.6 78.4 H956 M952.6 80.8 H956" stroke="#c5ccd8" stroke-width=".8"/>
<path d="M176.6 63.3 H182.6 L179.6 66.5 Z" fill="#5478b0"/>
<path d="M268.5 110.3 H274.5 L271.5 113.5 Z" fill="#a9a9a9"/>
<path d="M443.1 110.3 H449.1 L446.1 113.5 Z" fill="#5478b0"/>
<path d="M473.2 110.3 H479.2 L476.2 113.5 Z" fill="#5478b0"/>
<path d="M678.8 63.3 H684.8 L681.8 66.5 Z" fill="#5478b0"/>
<path d="M599.1 85.5 H605.1 L602.1 88.7 Z" fill="#5478b0"/>
<path d="M609.1 107.2 H615.1 L612.1 110.4 Z" fill="#5478b0"/>
<path d="M717.4 110.0 H723.4 L720.4 113.2 Z" fill="#5478b0"/>
<path d="M759.3 110.0 H765.3 L762.3 113.2 Z" fill="#5478b0"/>
<path d="M885.2 110.2 H891.2 L888.2 113.4 Z" fill="#5478b0"/>
</svg>

<div id="uitext">
<span class="u k" style="left:422.0px;top:6.4px;transform:scaleX(0.820)">SURAT</span>
<span class="u k" style="left:461.2px;top:6.4px;transform:scaleX(0.862)">IZIN</span>
<span class="u k" style="left:488.0px;top:6.4px;transform:scaleX(0.895)">-</span>
<span class="u k" style="left:496.4px;top:6.4px;transform:scaleX(0.942)">Microsoft</span>
<span class="u k" style="left:550.2px;top:6.4px;transform:scaleX(0.881)">Word</span>
<span class="u b" style="left:-1.0px;top:31.6px;transform:scaleX(0.920)">age</span>
<span class="u b" style="left:21.7px;top:31.6px;transform:scaleX(0.951)">Layout</span>
<span class="u b" style="left:84.7px;top:31.6px;transform:scaleX(0.916)">References</span>
<span class="u b" style="left:169.6px;top:31.6px;transform:scaleX(1.002)">Mailings</span>
<span class="u b" style="left:242.7px;top:31.6px;transform:scaleX(0.923)">Review</span>
<span class="u b" style="left:305.8px;top:31.6px;transform:scaleX(0.991)">View</span>
<span class="u b" style="left:64.4px;top:58.2px;transform:scaleX(0.982)">Translation</span>
<span class="u b" style="left:125.1px;top:58.2px;transform:scaleX(0.895)">ScreenTip</span>
<span class="u b" style="left:64.9px;top:79.8px;transform:scaleX(0.810)">Set</span>
<span class="u b" style="left:83.3px;top:79.8px;transform:scaleX(0.969)">Language</span>
<span class="u b" style="left:63.8px;top:101.8px;transform:scaleX(0.876)">Word</span>
<span class="u b" style="left:96.9px;top:101.8px;transform:scaleX(1.005)">Count</span>
<span class="u b" style="left:-0.5px;top:91.8px;transform:scaleX(0.936)">ranslate</span>
<span class="u l" style="left:-6.0px;top:121.6px;transform:scaleX(1.051)">oofing</span>
<span class="u b" style="left:212.8px;top:91.8px;transform:scaleX(0.952)">New</span>
<span class="u b" style="left:200.5px;top:104.6px;transform:scaleX(0.937)">Comment</span>
<span class="u g" style="left:256.4px;top:91.8px;transform:scaleX(0.919)">Delete</span>
<span class="u g" style="left:295.6px;top:91.8px;transform:scaleX(0.922)">Previous</span>
<span class="u g" style="left:350.6px;top:91.8px;transform:scaleX(0.948)">Next</span>
<span class="u l" style="left:263.7px;top:121.2px;transform:scaleX(0.936)">Comments</span>
<span class="u b" style="left:409.5px;top:91.8px;transform:scaleX(0.865)">Track</span>
<span class="u b" style="left:396.7px;top:104.6px;transform:scaleX(0.939)">Changes</span>
<span class="u b" style="left:454.3px;top:91.8px;transform:scaleX(1.000)">Balloons</span>
<span class="u b" style="left:529.0px;top:57.6px;transform:scaleX(0.975)">Final</span>
<span class="u b" style="left:557.5px;top:57.6px;transform:scaleX(0.978)">Showing</span>
<span class="u b" style="left:605.5px;top:57.6px;transform:scaleX(1.006)">Markup</span>
<span class="u b" style="left:524.6px;top:80.0px;transform:scaleX(0.924)">Show</span>
<span class="u b" style="left:556.4px;top:80.0px;transform:scaleX(1.003)">Markup</span>
<span class="u b" style="left:524.6px;top:102.0px;transform:scaleX(0.989)">Reviewing</span>
<span class="u b" style="left:582.5px;top:102.0px;transform:scaleX(0.831)">Pane</span>
<span class="u l" style="left:520.0px;top:121.2px;transform:scaleX(0.963)">Tracking</span>
<span class="u b" style="left:703.1px;top:92.2px;transform:scaleX(0.953)">Accept</span>
<span class="u b" style="left:747.3px;top:92.2px;transform:scaleX(0.940)">Reject</span>
<span class="u b" style="left:806.5px;top:66.4px;transform:scaleX(0.927)">Previous</span>
<span class="u b" style="left:806.5px;top:95.2px;transform:scaleX(0.956)">Next</span>
<span class="u l" style="left:754.5px;top:121.0px;transform:scaleX(0.946)">Changes</span>
<span class="u b" style="left:866.8px;top:92.2px;transform:scaleX(0.927)">Compare</span>
<span class="u g" style="left:917.3px;top:92.2px;transform:scaleX(0.903)">Show</span>
<span class="u g" style="left:947.5px;top:92.2px;transform:scaleX(0.776)">S</span>
<span class="u g" style="left:917.3px;top:104.0px;transform:scaleX(0.943)">Docume</span>
<span class="u l" style="left:903.7px;top:121.0px;transform:scaleX(0.939)">Compare</span>
</div>
</body>
</html>
